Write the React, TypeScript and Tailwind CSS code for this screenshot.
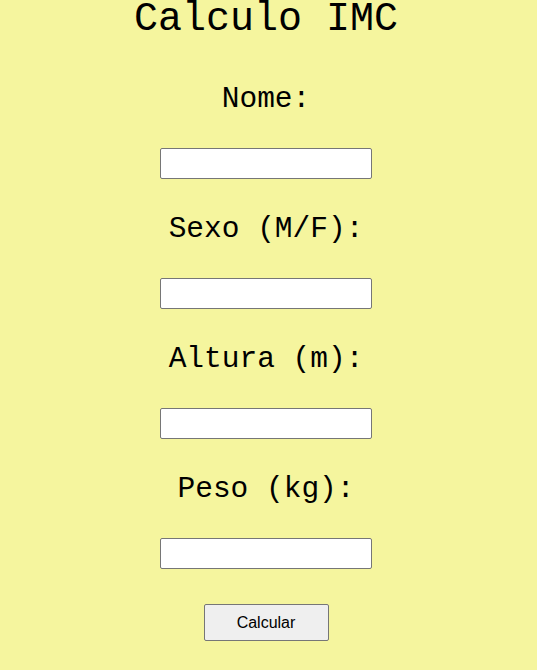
import React from 'react';

const fields = ['Nome:', 'Sexo (M/F):', 'Altura (m):', 'Peso (kg):'];

export default function App() {
  return (
    <div className="min-h-[670px] w-full bg-[#f5f59e] pr-[5px] font-['Liberation_Mono',monospace] text-black">
      <div className="flex flex-col items-center">
        <h1 className="m-0 text-[40px] leading-[40px] font-normal">Calculo IMC</h1>
        {fields.map((label, i) => (
          <div key={label} className={`flex flex-col items-center ${i === 0 ? 'mt-[41px]' : 'mt-[32px]'}`}>
            <label className="text-[29.5px] leading-[36px]">{label}</label>
            <input
              type="text"
              className="mt-[31px] h-[31px] w-[212px] rounded-[2px] border border-[#767676] bg-white px-1 font-['Liberation_Sans',sans-serif] text-sm outline-none"
            />
          </div>
        ))}
        <button className="mt-[35px] h-[37px] w-[125px] rounded-[2px] border border-[#767676] bg-[#efefef] font-['Liberation_Sans',Arial,sans-serif] text-[16px] text-black">
          Calcular
        </button>
      </div>
    </div>
  );
}
